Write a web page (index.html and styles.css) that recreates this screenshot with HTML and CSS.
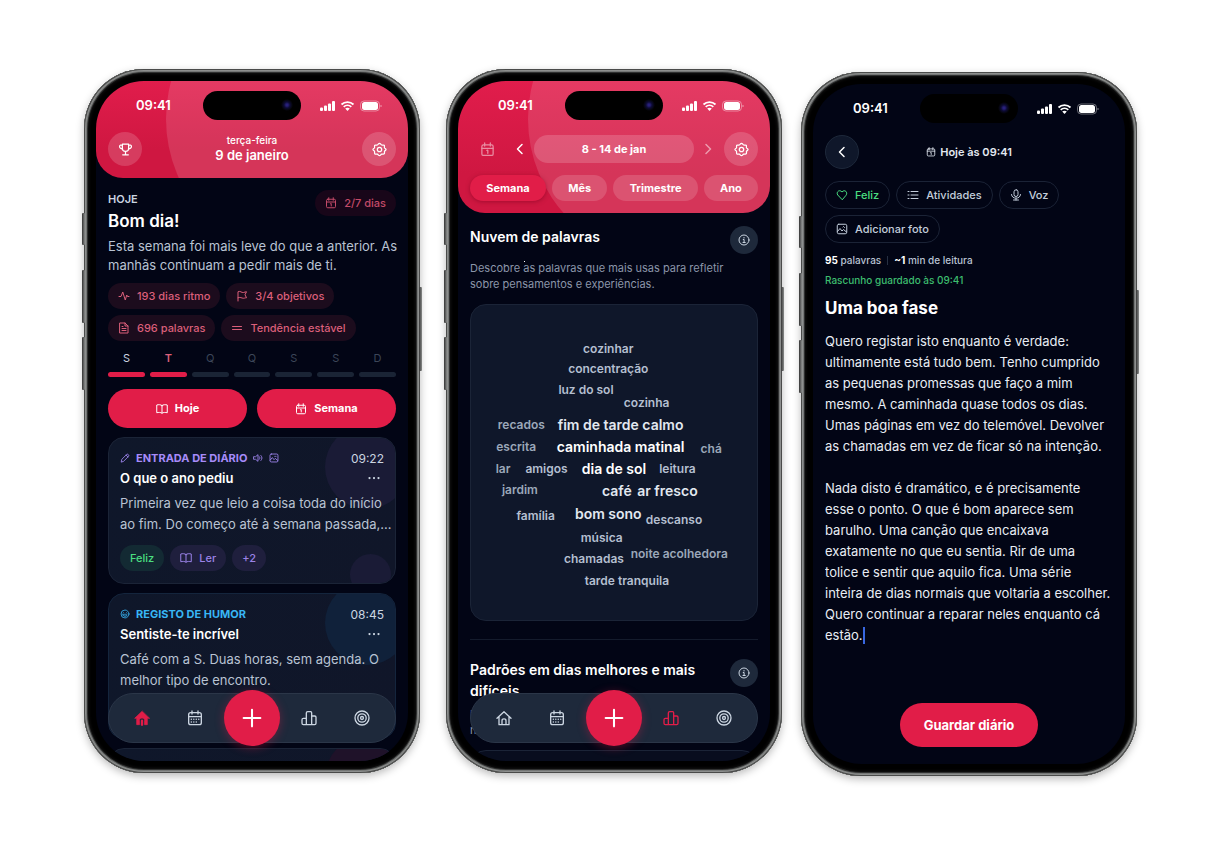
FILE: index.html
```html
<!DOCTYPE html>
<html lang="pt">
<head>
<meta charset="utf-8">
<meta name="viewport" content="width=device-width, initial-scale=1">
<title>Diário</title>
<link rel="stylesheet" href="styles.css">
</head>
<body>
<svg class="sprite" aria-hidden="true">
  <symbol id="trophy" viewBox="0 0 24 24"><path d="M7 3.500h10v6.500a5 5 0 0 1-10 0zM7 5.500C5 4.500 2.500 5 2.500 7.200S5 11.500 7.300 11M17 5.500c2-1 4.500-.5 4.500 1.700S19 11.500 16.700 11M12 15v5.500M7.500 20.500h9"/></symbol>
  <symbol id="gear" viewBox="0 0 24 24"><path d="M12 2.200c1.700 0 2 2 3.400 2.600s3-.6 4.100.5-.1 2.700.5 4.100 2.500 1 2.500 2.600-2 1.700-2.500 2.900.7 2.800-.5 4-2.700-.1-4.100.5-1.700 2.400-3.400 2.400-2-1.800-3.400-2.400-3 .7-4.100-.5.100-2.700-.5-4S1.500 13.600 1.500 12s2-1.300 2.500-2.600-.6-3 .5-4.100 2.700.1 4.100-.5S10.300 2.200 12 2.200z"/><circle cx="12" cy="12" r="3.500"/></symbol>
  <symbol id="calendar" viewBox="0 0 24 24"><rect x="3" y="4.500" width="18" height="17" rx="2.500"/><path d="M7.500 1.500v5M16.500 1.500v5M3 10h18M11 13.500l1.500-.5v5"/></symbol>
  <symbol id="calendar-dots" viewBox="0 0 24 24"><rect x="2.500" y="4" width="19" height="18" rx="3"/><path d="M7.500 1.500V6M16.500 1.500V6M3 10h18"/><path d="M6.500 14h.01M10.200 14h.01M13.900 14h.01M17.600 14h.01M6.500 18h.01M10.200 18h.01M13.900 18h.01" stroke-width="2.200"/></symbol>
  <symbol id="pulse" viewBox="0 0 24 24"><path d="M2 13h4l3.500-9 5 16 3-10 1.500 3h3"/></symbol>
  <symbol id="flag" viewBox="0 0 24 24"><path d="M4 22V3.500c5-2.500 7 2.500 11 1.500 2-.5 4-1.500 6-1.500l-3 6 3 6c-3 0-4 1-6 1-4 0-6-3-11-1"/></symbol>
  <symbol id="doc" viewBox="0 0 24 24"><path d="M4 2h10l6 6v14H4zM14 2v6h6M8 9h2M8 13h8M8 17h8"/></symbol>
  <symbol id="equal" viewBox="0 0 24 24"><path d="M3 9h18M3 15h18"/></symbol>
  <symbol id="book" viewBox="0 0 24 24"><path d="M12 5C9.500 3 5 3 1.500 4v15.500c3.500-1 8-1 10.500 1 2.500-2 7-2 10.500-1V4C19 3 14.500 3 12 5zM12 5v15"/></symbol>
  <symbol id="pencil" viewBox="0 0 24 24"><path d="M3 21l1.500-6L16.500 3c1.800-1.500 6 2.500 4.500 4.500L9 19.500zM14.500 5l4.500 4.500"/></symbol>
  <symbol id="sound" viewBox="0 0 24 24"><path d="M2 9h4l6-5v16l-6-5H2zM15.500 9c1.500 2 1.500 4 0 6M19 6c3.500 4 3.500 8 0 12"/></symbol>
  <symbol id="image" viewBox="0 0 24 24"><rect x="2.500" y="2.500" width="19" height="19" rx="3"/><path d="M3 17l5-6 4 5 3-3 6 5"/><path d="M14 8l1-1 2 2"/></symbol>
  <symbol id="smile" viewBox="0 0 24 24"><circle cx="12" cy="12" r="9.500"/><path d="M7 9.500c.5-1 2-1 2.500 0M14.500 9.500c.5-1 2-1 2.500 0M7 14h10c-.5 5-9.500 5-10 0z"/></symbol>
  <symbol id="home" viewBox="0 0 24 24"><path d="M1.500 12.500L12 2.500l10.500 10M4.500 10v12h15V10M9 22v-6c0-3.500 6-3.500 6 0v6"/></symbol>
  <symbol id="home-solid" viewBox="0 0 24 24"><path fill="currentColor" stroke-width="1" d="M12 2L1 12.500h3V22h4.200v-6.500c0-4.500 7.600-4.500 7.600 0V22H20v-9.500h3z"/><path d="M12 16V22" stroke-width="3.500"/></symbol>
  <symbol id="bars" viewBox="0 0 24 24"><path d="M8 22H3.500C2 22 1.500 21.500 1.500 20v-5.500C1.500 13 2 12.500 3.500 12.500H8M8 22V4.500C8 3 8.500 2.500 10 2.500h4.500c1 0 1.500.5 1.500 2V22M8 22h12.500c1.500 0 2-.5 2-2v-9c0-1.500-.5-2-2-2H16"/></symbol>
  <symbol id="target" viewBox="0 0 24 24"><circle cx="12" cy="12" r="10.500"/><circle cx="12" cy="12" r="6.300"/><circle cx="12" cy="12" r="2.200"/></symbol>
  <symbol id="plus" viewBox="0 0 24 24"><path d="M12 2v20M2 12h20"/></symbol>
  <symbol id="left" viewBox="0 0 24 24"><path d="M16 3L7 12l9 9" stroke-width="3"/></symbol>
  <symbol id="right" viewBox="0 0 24 24"><path d="M8 3l9 9-9 9" stroke-width="3"/></symbol>
  <symbol id="info" viewBox="0 0 24 24"><circle cx="12" cy="12" r="10"/><path d="M10.500 11h1.700v6M10 17h4.500M12 7v1"/></symbol>
  <symbol id="heart" viewBox="0 0 24 24"><path d="M12 21L3.500 12C-.5 7 6.500-.5 12 6c5.500-6.500 12.500 1 8.500 6z"/></symbol>
  <symbol id="list" viewBox="0 0 24 24"><path d="M8 5h14M8 12h14M8 19h14M2 5h2M2 12h2M2 19h2"/></symbol>
  <symbol id="mic" viewBox="0 0 24 24"><rect x="8" y="1.500" width="8" height="13.500" rx="4"/><path d="M3 11c0 10 18 10 18 0M12 18.500V22M7 22h10"/></symbol>
  <symbol id="dots" viewBox="0 0 24 24"><path d="M3 12h.01M12 12h.01M21 12h.01" stroke-width="4.500"/></symbol>
  <symbol id="status" viewBox="0 0 62 12">
    <g fill="currentColor" stroke="none">
      <rect x="0" y="7.500" width="3" height="3.500" rx="1"/><rect x="4" y="5.500" width="3" height="5.500" rx="1"/><rect x="8" y="3.500" width="3" height="7.500" rx="1"/><rect x="12" y="1" width="3" height="10" rx="1"/>
      <path d="M27.500 11l-2.300-2.400c1.300-1.200 3.300-1.200 4.600 0z"/>
      <rect x="42" y="2" width="16" height="8" rx="2.500"/>
    </g>
    <path d="M21.500 4.500c3.400-3.300 8.600-3.300 12 0M23.700 6.900c2.200-2 5.400-2 7.600 0" stroke-width="1.800" stroke-linecap="butt"/>
    <rect x="40.500" y="1" width="19" height="10" rx="3.500" stroke-width="1" opacity=".4"/><path d="M61 5v2" stroke-width="1" opacity=".5"/>
  </symbol>
</svg>

<main class="showcase">
  <section class="phone" aria-label="Hoje">
    <i class="key key-action"></i><i class="key key-up"></i><i class="key key-down"></i><i class="key key-power"></i>
    <div class="screen">
      <header class="hero">
        <div class="statusbar"><time>09:41</time><span class="island"></span><svg class="status-icons"><use href="#status"/></svg></div>
        <div class="toolbar">
          <button class="round" aria-label="Conquistas"><svg class="icon icon-m"><use href="#trophy"/></svg></button>
          <div class="date"><span>terça-feira</span><strong>9 de janeiro</strong></div>
          <button class="round" aria-label="Definições"><svg class="icon icon-m"><use href="#gear"/></svg></button>
        </div>
      </header>
      <div class="today">
        <div class="greeting">
          <div><p class="eyebrow">HOJE</p><h1>Bom dia!</h1></div>
          <span class="chip chip-rose"><svg class="icon"><use href="#calendar"/></svg>2/7 dias</span>
        </div>
        <p class="summary">Esta semana foi mais leve do que a anterior. As manhãs continuam a pedir mais de ti.</p>
        <div class="chips">
          <span class="chip chip-rose"><svg class="icon"><use href="#pulse"/></svg>193 dias ritmo</span>
          <span class="chip chip-rose"><svg class="icon"><use href="#flag"/></svg>3/4 objetivos</span>
          <span class="chip chip-rose"><svg class="icon"><use href="#doc"/></svg>696 palavras</span>
          <span class="chip chip-rose"><svg class="icon"><use href="#equal"/></svg>Tendência estável</span>
        </div>
        <ol class="week">
          <li class="done">S</li><li class="done current">T</li><li>Q</li><li>Q</li><li>S</li><li>S</li><li>D</li>
        </ol>
        <div class="actions">
          <button class="primary"><svg class="icon"><use href="#book"/></svg>Hoje</button>
          <button class="primary"><svg class="icon"><use href="#calendar"/></svg>Semana</button>
        </div>
        <article class="entry entry-violet">
          <div class="entry-top"><svg class="icon icon-s"><use href="#pencil"/></svg><span class="kind">ENTRADA DE DIÁRIO</span><svg class="icon icon-s"><use href="#sound"/></svg><svg class="icon icon-s"><use href="#image"/></svg><time>09:22</time></div>
          <div class="entry-title"><h2>O que o ano pediu</h2><button aria-label="Mais opções"><svg class="icon"><use href="#dots"/></svg></button></div>
          <p>Primeira vez que leio a coisa toda do início ao fim. Do começo até à semana passada,…</p>
          <div class="tags"><span class="tag tag-green">Feliz</span><span class="tag"><svg class="icon"><use href="#book"/></svg>Ler</span><span class="tag">+2</span></div>
        </article>
        <article class="entry entry-blue">
          <div class="entry-top"><svg class="icon icon-s"><use href="#smile"/></svg><span class="kind">REGISTO DE HUMOR</span><time>08:45</time></div>
          <div class="entry-title"><h2>Sentiste-te incrível</h2><button aria-label="Mais opções"><svg class="icon"><use href="#dots"/></svg></button></div>
          <p>Café com a S. Duas horas, sem agenda. O melhor tipo de encontro.</p>
        </article>
        <article class="entry entry-rose"></article>
      </div>
      <nav class="tabbar" aria-label="Principal">
        <a href="#" class="active" aria-label="Início"><svg class="icon icon-l"><use href="#home-solid"/></svg></a>
        <a href="#" aria-label="Calendário"><svg class="icon icon-l"><use href="#calendar-dots"/></svg></a>
        <button class="add" aria-label="Adicionar"><svg class="icon icon-xl"><use href="#plus"/></svg></button>
        <a href="#" aria-label="Estatísticas"><svg class="icon icon-l"><use href="#bars"/></svg></a>
        <a href="#" aria-label="Objetivos"><svg class="icon icon-l"><use href="#target"/></svg></a>
      </nav>
    </div>
  </section>

  <section class="phone phone-insights" aria-label="Estatísticas">
    <i class="key key-action"></i><i class="key key-up"></i><i class="key key-down"></i><i class="key key-power"></i>
    <div class="screen">
      <header class="hero">
        <div class="statusbar"><time>09:41</time><span class="island"></span><svg class="status-icons"><use href="#status"/></svg></div>
        <div class="toolbar">
          <button class="plain faded wide" aria-label="Ir para hoje"><svg class="icon icon-m"><use href="#calendar"/></svg></button>
          <button class="plain" aria-label="Anterior"><svg class="icon"><use href="#left"/></svg></button>
          <button class="range">8 - 14 de jan</button>
          <button class="plain faded" aria-label="Seguinte"><svg class="icon"><use href="#right"/></svg></button>
          <button class="round" aria-label="Definições"><svg class="icon icon-m"><use href="#gear"/></svg></button>
        </div>
        <div class="periods"><button class="selected">Semana</button><button>Mês</button><button>Trimestre</button><button>Ano</button></div>
      </header>
      <div class="insights">
        <section class="insight">
          <div class="insight-head"><h2>Nuvem de palavras</h2><button class="info" aria-label="Informação"><svg class="icon"><use href="#info"/></svg></button></div>
          <p>Descobre as palavras que mais usas para refletir sobre pensamentos e experiências.<i class="speck"></i></p>
          <div class="cloud">
            <span style="left:48%;top:13.600%">cozinhar</span>
            <span style="left:48%;top:20%">concentração</span>
            <span style="left:40.200%;top:26.600%">luz do sol</span>
            <span style="left:61.400%;top:30.900%">cozinha</span>
            <span class="dim" style="left:17.600%;top:37.900%">recados</span>
            <span class="big" style="left:52.300%;top:37.900%">fim de tarde calmo</span>
            <span class="dim" style="left:15.800%;top:44.900%">escrita</span>
            <span class="big top" style="left:52.300%;top:44.700%">caminhada matinal</span>
            <span class="dim" style="left:84%;top:45.500%">chá</span>
            <span class="dim" style="left:11.200%;top:51.700%">lar</span>
            <span style="left:26.400%;top:51.700%">amigos</span>
            <span class="big top" style="left:50%;top:51.700%">dia de sol</span>
            <span style="left:72.200%;top:51.700%">leitura</span>
            <span class="dim" style="left:17.100%;top:58.400%">jardim</span>
            <span class="big" style="left:51%;top:58.700%">café</span>
            <span class="big" style="left:68.700%;top:58.700%">ar fresco</span>
            <span style="left:22.600%;top:66.600%">família</span>
            <span class="big" style="left:48%;top:66%">bom sono</span>
            <span style="left:71%;top:67.900%">descanso</span>
            <span style="left:45.700%;top:73.600%">música</span>
            <span style="left:43%;top:80.300%">chamadas</span>
            <span class="dim" style="left:72.800%;top:78.700%">noite acolhedora</span>
            <span style="left:54.500%;top:87.200%">tarde tranquila</span>
          </div>
        </section>
        <section class="insight insight-next">
          <div class="insight-head"><h2>Padrões em dias melhores e mais difíceis</h2><button class="info" aria-label="Informação"><svg class="icon"><use href="#info"/></svg></button></div>
          <p>Identifica os padrões<br>nos teus dias.</p>
          <div class="panel"></div>
        </section>
      </div>
      <nav class="tabbar" aria-label="Principal">
        <a href="#" aria-label="Início"><svg class="icon icon-l"><use href="#home"/></svg></a>
        <a href="#" aria-label="Calendário"><svg class="icon icon-l"><use href="#calendar-dots"/></svg></a>
        <button class="add" aria-label="Adicionar"><svg class="icon icon-xl"><use href="#plus"/></svg></button>
        <a href="#" class="active" aria-label="Estatísticas"><svg class="icon icon-l"><use href="#bars"/></svg></a>
        <a href="#" aria-label="Objetivos"><svg class="icon icon-l"><use href="#target"/></svg></a>
      </nav>
    </div>
  </section>

  <section class="phone phone-editor" aria-label="Editor">
    <i class="key key-action"></i><i class="key key-up"></i><i class="key key-down"></i><i class="key key-power"></i>
    <div class="screen">
      <div class="statusbar"><time>09:41</time><span class="island"></span><svg class="status-icons"><use href="#status"/></svg></div>
      <form class="editor">
        <div class="editor-head">
          <button type="button" class="back" aria-label="Voltar"><svg class="icon"><use href="#left"/></svg></button>
          <span class="when"><svg class="icon icon-s"><use href="#calendar"/></svg>Hoje às 09:41</span>
        </div>
        <div class="tools">
          <button type="button" class="mood"><svg class="icon"><use href="#heart"/></svg>Feliz</button>
          <button type="button"><svg class="icon"><use href="#list"/></svg>Atividades</button>
          <button type="button"><svg class="icon"><use href="#mic"/></svg>Voz</button>
          <button type="button"><svg class="icon"><use href="#image"/></svg>Adicionar foto</button>
        </div>
        <p class="stats"><span><b>95</b> palavras</span><span><b>~1</b> min de leitura</span></p>
        <p class="saved">Rascunho guardado às 09:41</p>
        <input class="title" type="text" aria-label="Título" value="Uma boa fase">
        <div class="body">
          <textarea rows="15" spellcheck="false" aria-label="Texto do diário">Quero registar isto enquanto é verdade: ultimamente está tudo bem. Tenho cumprido as pequenas promessas que faço a mim mesmo. A caminhada quase todos os dias. Umas páginas em vez do telemóvel. Devolver as chamadas em vez de ficar só na intenção.

Nada disto é dramático, e é precisamente
esse o ponto. O que é bom aparece sem
barulho. Uma canção que encaixava
exatamente no que eu sentia. Rir de uma
tolice e sentir que aquilo fica. Uma série
inteira de dias normais que voltaria a escolher.
Quero continuar a reparar neles enquanto cá
estão.</textarea>
          <i class="caret"></i>
        </div>
        <button type="button" class="primary save">Guardar diário</button>
      </form>
    </div>
  </section>
</main>
</body>
</html>
```
FILE: styles.css
```css
:root {
  --ink: #020515;
  --card: #0f172a;
  --line: #1b2437;
  --slate: #1e293b;
  --muted: #8b95a9;
  --soft: #cbd5e1;
  --rose: #e11d48;
}

* { box-sizing: border-box; }

body {
  margin: 0;
  background: #fff;
  color: #fff;
  font: 13px/19px Inter, "Liberation Sans", sans-serif;
}

h1, h2, p, ol { margin: 0; padding: 0; }

button, input, textarea {
  margin: 0;
  padding: 0;
  border: 0;
  background: none;
  color: inherit;
  font: inherit;
}

.sprite { position: absolute; width: 0; height: 0; }

.icon {
  flex: none;
  width: 12px;
  height: 12px;
  fill: none;
  stroke: currentColor;
  stroke-width: 2;
  stroke-linecap: round;
  stroke-linejoin: round;
}
.icon-s { width: 10px; height: 10px; }
.icon-m { width: 15px; height: 15px; }
.icon-l { width: 16px; height: 16px; }
.icon-xl { width: 20px; height: 20px; stroke-width: 2.5; }

.showcase {
  display: flex;
  align-items: flex-start;
  gap: 19px;
  padding: 69px 91px 68px 84px;
}

/* Device frame */
.phone {
  position: relative;
  flex: 1 1 0;
  min-width: 0;
  aspect-ratio: 336 / 704;
  padding: 12px;
  border-radius: 60px;
  background: #000;
  box-shadow:
    inset 0 0 0 1px #4a4b4a,
    inset 0 0 0 2px #8d8f8e,
    inset 0 0 0 3px #747675,
    inset 0 0 0 4px #2f3030,
    inset 0 0 3px 5px #111,
    0 3px 9px rgba(0, 0, 0, .28);
}
.phone-insights { margin-left: 7px; }
.phone-editor { margin-top: 3px; }

.key {
  position: absolute;
  width: 3px;
  border-radius: 1px;
  background: linear-gradient(90deg, #333, #8a8c8b);
}
.key-action { left: -2px; top: 20.500%; height: 32px; }
.key-up { left: -2px; top: 28.500%; height: 53px; }
.key-down { left: -2px; top: 38%; height: 53px; }
.key-power { right: -2px; top: 31%; height: 84px; }

.screen {
  position: relative;
  height: 100%;
  overflow: hidden;
  border-radius: 48px;
  background: var(--ink);
}

.statusbar {
  position: relative;
  display: flex;
  align-items: center;
  justify-content: space-between;
  height: 51px;
  padding: 0 26px 2px 40px;
}
.statusbar time { font-weight: 600; }
.status-icons {
  width: 62px;
  height: 12px;
  fill: none;
  stroke: currentColor;
}
.island {
  width: 98px;
  height: 29px;
  margin: 0 -1px 0 12px;
  border-radius: 15px;
  background:
    radial-gradient(circle at 84px 14px, #28207a 0 1px, #0d0b35 3px, #05050f 5px, transparent 6px),
    #000;
}

/* Coloured header */
.hero {
  position: relative;
  overflow: hidden;
  padding-bottom: 12px;
  border-radius: 0 0 27px 27px;
  background: linear-gradient(#e11d4c, #cf1741 70%);
}
.hero::before {
  content: "";
  position: absolute;
  left: 70px;
  top: -104px;
  width: 284px;
  height: 284px;
  border-radius: 50%;
  background: rgba(255, 255, 255, .13);
}
.toolbar {
  position: relative;
  display: flex;
  align-items: center;
  justify-content: space-between;
  padding: 0 12px;
}
.round, .plain, .info, .back {
  display: grid;
  place-items: center;
  flex: none;
}
.round {
  width: 34px;
  height: 34px;
  border-radius: 50%;
  background: rgba(255, 255, 255, .16);
}
.date { padding-bottom: 2px; text-align: center; line-height: 15px; }
.date span { display: block; font-size: 10px; font-weight: 500; }
.date strong { font-size: 13px; font-weight: 600; }

.plain { width: 28px; height: 34px; }
.wide { width: 34px; }
.faded { opacity: .5; }
.range {
  flex: 1;
  height: 28px;
  border-radius: 14px;
  background: rgba(255, 255, 255, .17);
  font-size: 11px;
  font-weight: 700;
}
.range + .plain { margin-right: 2px; }
.wide + .plain { margin-left: 2px; }

.periods {
  position: relative;
  display: flex;
  justify-content: space-between;
  gap: 6px;
  padding: 9px 12px 0;
}
.periods button {
  flex: auto;
  height: 26px;
  border-radius: 13px;
  background: rgba(255, 255, 255, .15);
  font-size: 11px;
  font-weight: 700;
}
.periods .selected {
  background: var(--rose);
  box-shadow: 0 1px 4px rgba(120, 0, 30, .5);
}

/* Today */
.today { padding: 12px; }
.greeting { display: flex; align-items: flex-start; justify-content: space-between; }
.eyebrow { color: var(--soft); font-size: 11px; font-weight: 600; line-height: 18px; }
h1 { font-size: 17px; font-weight: 600; line-height: 27px; }
.summary { margin: 2px -4px 0 0; color: #b9c3d3; }

.chips { display: flex; flex-wrap: wrap; gap: 6px; margin-top: 8px; }
.chip {
  display: flex;
  align-items: center;
  gap: 7px;
  height: 26px;
  padding: 0 10px;
  border-radius: 13px;
  font-size: 11px;
  font-weight: 500;
}
.chip-rose { background: #1c0c1d; color: #db5f7a; }
.greeting .chip { background: #180619; color: #c34a68; }

.week {
  display: grid;
  grid-template-columns: repeat(7, 1fr);
  gap: 5px;
  margin-top: 8px;
  list-style: none;
  color: #3c4658;
  font-size: 11px;
  line-height: 18px;
  text-align: center;
}
.week li::after {
  content: "";
  display: block;
  height: 5px;
  margin-top: 5px;
  border-radius: 3px;
  background: #1a2435;
}
.week .done { color: var(--soft); }
.week .current { color: #db5f7a; font-weight: 600; }
.week .done::after { background: var(--rose); }

.actions { display: grid; grid-template-columns: 1fr 1fr; gap: 10px; margin: 12px 0 9px; }
.primary {
  display: flex;
  align-items: center;
  justify-content: center;
  gap: 7px;
  height: 39px;
  border-radius: 22px;
  background: var(--rose);
  font-size: 11px;
  font-weight: 700;
}

.entry {
  position: relative;
  overflow: hidden;
  min-height: 146px;
  margin-bottom: 9px;
  padding: 11px 11px 12px;
  border: 1px solid var(--line);
  border-radius: 16px;
  background: linear-gradient(100deg, var(--card), #101629);
}
.entry::before, .entry::after {
  content: "";
  position: absolute;
  border-radius: 50%;
  background: var(--glow);
}
.entry::before { right: -14px; top: -13px; width: 84px; height: 84px; }
.entry::after { right: 4px; bottom: -12px; width: 41px; height: 41px; }
.entry > * { position: relative; z-index: 1; }
.entry-violet { --accent: #a78bfa; --glow: #1a1b36; }
.entry-blue { --accent: #38b6f5; --glow: #10213a; border-color: #14253d; }
.entry-blue::after { content: none; }
.entry-rose { --accent: #fb7185; --glow: #1f1229; }
.entry-top { display: flex; align-items: center; gap: 6px; height: 18px; color: var(--accent); }
.kind { font-size: 11px; font-weight: 700; }
.entry-top time { margin-left: auto; color: var(--soft); font-size: 12px; }
.entry-title { display: flex; align-items: center; justify-content: space-between; height: 22px; }
h2 { font-size: 13px; font-weight: 600; }
.entry-title button { display: grid; place-items: center; width: 20px; color: var(--soft); }
.entry p { margin: 4px -10px 0 0; color: #b9c3d3; line-height: 21px; }
.tags { display: flex; gap: 6px; margin-top: 10px; }
.tag {
  display: flex;
  align-items: center;
  gap: 7px;
  height: 26px;
  padding: 0 10px;
  border-radius: 13px;
  background: #1f1f3d;
  color: #9b83e8;
  font-size: 11px;
  font-weight: 500;
}
.tag-green { background: #132a33; color: #4ade80; }

/* Bottom navigation */
.tabbar {
  position: absolute;
  right: 12px;
  bottom: 18px;
  left: 12px;
  z-index: 2;
  display: grid;
  grid-template: 48px / 1fr 1fr 60px 1fr 1fr;
  place-items: center;
  padding: 0 6px;
  border: 1px solid #2b3648;
  border-radius: 25px;
  background: var(--slate);
}
.tabbar a { display: grid; color: var(--soft); }
.tabbar .active { color: var(--rose); }
.add {
  display: grid;
  place-items: center;
  width: 56px;
  height: 56px;
  border-radius: 50%;
  background: var(--rose);
  box-shadow: 0 2px 10px rgba(225, 29, 72, .35);
}

/* Insights */
.insights { padding: 13px 12px; }
.insight-head { display: flex; align-items: flex-start; justify-content: space-between; gap: 12px; min-height: 34px; }
.insight-head h2 { font-size: 14px; line-height: 21px; }
.info { width: 28px; height: 28px; border-radius: 50%; background: var(--slate); color: var(--soft); }
.insight p { position: relative; padding-right: 24px; color: var(--muted); font-size: 11px; line-height: 16px; }
.speck { position: absolute; left: 54px; top: 1px; width: 1px; height: 1px; background: #fff; }
.cloud {
  position: relative;
  height: 317px;
  margin-top: 12px;
  border: 1px solid var(--line);
  border-radius: 16px;
  background: var(--card);
  color: #b4bfd0;
  font-size: 12px;
  font-weight: 600;
}
.cloud span { position: absolute; transform: translate(-50%, -50%); white-space: nowrap; }
.cloud .dim { color: #9ba7b9; }
.cloud .big { color: #e2e8f0; font-size: 14px; }
.cloud .top { color: #fff; }
.insight-next { margin-top: 18px; padding-top: 19px; border-top: 1px solid #141b2c; }
.insight-next p { margin-top: 5px; }
.panel { height: 60px; margin-top: 12px; border: 1px solid var(--line); border-radius: 16px; background: #080d1e; }

/* Editor */
.editor { display: flex; flex-direction: column; height: calc(100% - 51px); padding: 0 12px 17px; }
.editor-head { display: grid; grid-template-columns: 34px 1fr 34px; align-items: center; }
.back { width: 34px; height: 34px; border: 1px solid #1d283a; border-radius: 50%; background: var(--card); }
.when { display: flex; align-items: center; justify-content: center; gap: 4px; color: #e2e8f0; font-size: 11px; font-weight: 600; }
.tools { display: flex; flex-wrap: wrap; gap: 6px; margin-top: 12px; }
.tools button {
  display: flex;
  align-items: center;
  gap: 7px;
  height: 28px;
  padding: 0 10px;
  border: 1px solid #1b2336;
  border-radius: 14px;
  color: #c3cddb;
  font-size: 11px;
  font-weight: 500;
}
.tools .mood { color: #4ade80; }
.stats { display: flex; margin-top: 7px; color: #b9c3d3; font-size: 10px; line-height: 20px; font-weight: 500; }
.stats b { color: #fff; font-weight: 700; }
.stats span + span { margin-left: 6px; }
.stats span + span::before { content: ""; display: inline-block; width: 1px; height: 9px; margin-right: 6px; background: #273042; vertical-align: -1px; }
.saved { color: #3dbd6f; font-size: 10px; font-weight: 500; line-height: 20px; }
.title { width: 100%; height: 36px; font-size: 17px; font-weight: 700; }
.body { position: relative; margin-top: 5px; }
.body textarea {
  display: block;
  width: 100%;
  overflow: hidden;
  resize: none;
  outline: 0;
  color: #e8edf4;
  font-size: 13px;
  line-height: 21px;
}
.caret { position: absolute; left: 38px; bottom: 2px; width: 2px; height: 17px; background: #3867e0; }
.save { align-self: center; height: 44px; margin-top: auto; padding: 0 24px; font-size: 13px; }
```
